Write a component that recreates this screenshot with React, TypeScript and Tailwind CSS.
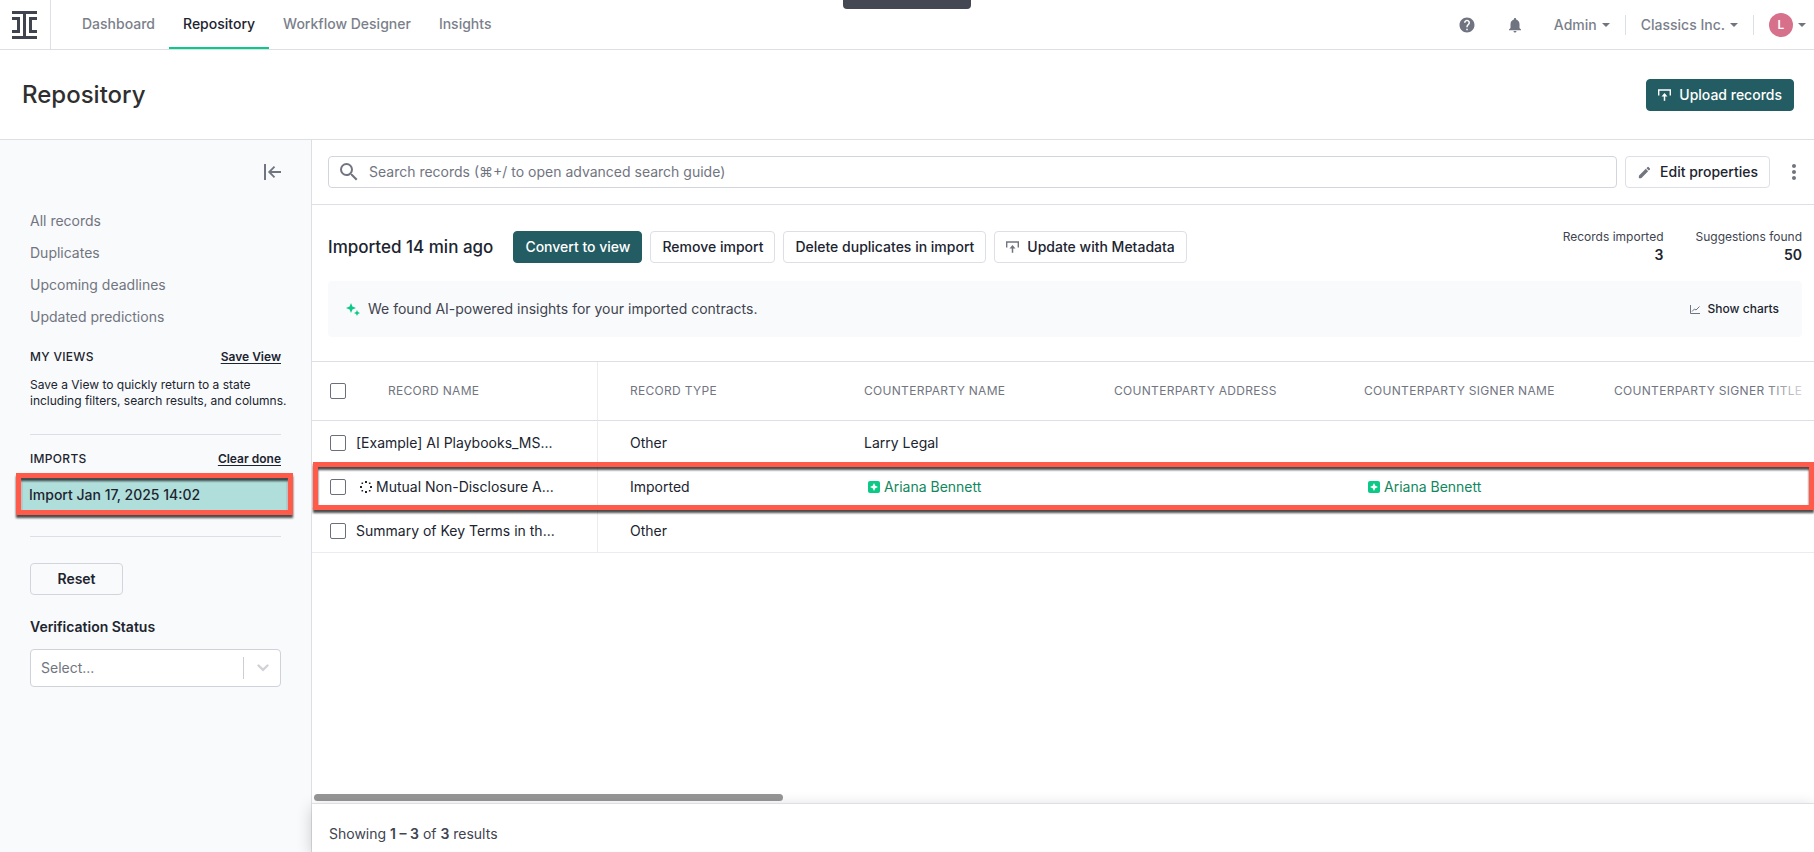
import React, { useState } from 'react';
import { MdEdit, MdHelp, MdMoreVert, MdNotifications, MdSearch } from 'react-icons/md';

type Suggestion = { suggested: string };
type Cell = string | Suggestion;

interface RecordRow {
  name: string;
  loading?: boolean;
  type: string;
  cells: Cell[];
}

const navLinks = ['Dashboard', 'Repository', 'Workflow Designer', 'Insights'];

const filters = ['All records', 'Duplicates', 'Upcoming deadlines', 'Updated predictions'];

const propertyColumns = [
  'Counterparty Name',
  'Counterparty Address',
  'Counterparty Signer Name',
  'Counterparty Signer Title',
];

const records: RecordRow[] = [
  { name: '[Example] AI Playbooks_MS...', type: 'Other', cells: ['Larry Legal', '', '', ''] },
  {
    name: 'Mutual Non-Disclosure A...',
    loading: true,
    type: 'Imported',
    cells: [{ suggested: 'Ariana Bennett' }, '', { suggested: 'Ariana Bennett' }, ''],
  },
  { name: 'Summary of Key Terms in th...', type: 'Other', cells: ['', '', '', ''] },
];

const Logo = () => (
  <svg width="26" height="28" viewBox="0 0 26 28" fill="#40444f" aria-hidden="true">
    <path d="M0 0h25v3H14v22h11v3H0v-3h11V3H0z" />
    <path d="M0 6h8v16H0v-3h5V9H0zM25 6h-8v16h8v-3h-5V9h5z" />
  </svg>
);

const Caret = () => (
  <svg width="8" height="4" viewBox="0 0 8 4" fill="#6f7480" aria-hidden="true">
    <path d="M0 0h8L4 4z" />
  </svg>
);

const UploadIcon = () => (
  <svg width="13" height="12" viewBox="0 0 13 12" fill="none" stroke="currentColor" aria-hidden="true">
    <path d="M.7 6.500V1h11.600v5.500" strokeWidth="1.4" />
    <path d="M6.500 11.800V6" strokeWidth="1.5" />
    <path d="M3.500 7.400 6.500 4l3 3.400z" fill="currentColor" stroke="none" />
  </svg>
);

const CollapseIcon = () => (
  <svg width="17" height="16" viewBox="0 0 17 16" fill="none" stroke="#71757f" aria-hidden="true">
    <path d="M1 0v16" strokeWidth="2" />
    <path d="M17 8H5.500M10.500 2.700 5.200 8l5.300 5.300" strokeWidth="1.8" />
  </svg>
);

const SparkleIcon = () => (
  <svg width="14" height="13" viewBox="0 0 14 13" fill="#0bc986" aria-hidden="true">
    <path d="M5 0 6.400 3.600 10 5 6.400 6.400 5 10 3.600 6.400 0 5 3.600 3.600z" />
    <path d="m11 7 .9 2.100L14 10l-2.100.9L11 13l-.9-2.100L8 10l2.100-.9z" />
  </svg>
);

const ChartIcon = () => (
  <svg width="10" height="9" viewBox="0 0 10 9" fill="none" stroke="#6f7480" aria-hidden="true">
    <path d="M.5 0v8.500H10" />
    <path d="M2 6.500 4.500 4l1.500 1L9.500 1.500" />
  </svg>
);

const SpinnerIcon = () => (
  <svg width="12" height="12" viewBox="0 0 12 12" fill="#20242f" aria-hidden="true">
    <path d="M5 0h2v2H5zM5 10h2v2H5zM0 5h2v2H0zM10 5h2v2h-2z" />
    <path d="M1.500 1.500h1.600v1.600H1.500zM8.900 1.500h1.600v1.600H8.900zM1.500 8.900h1.600v1.600H1.500zM8.900 8.900h1.600v1.600H8.900z" />
  </svg>
);

const SuggestionIcon = () => (
  <svg width="12" height="12" viewBox="0 0 12 12" aria-hidden="true">
    <rect width="12" height="12" rx="2" fill="#0bc986" />
    <path d="M6 2 7.300 4.700 10 6 7.300 7.300 6 10 4.700 7.300 2 6l2.700-1.300z" fill="#fff" />
  </svg>
);

const Highlight = ({ className }: { className: string }) => (
  <div
    className={`pointer-events-none absolute border-5 border-[#ff5a4a] drop-shadow-[0_3px_1px_rgba(0,0,0,0.7)] ${className}`}
  />
);

interface ButtonProps {
  children: React.ReactNode;
  primary?: boolean;
}

const Button: React.FC<ButtonProps> = ({ children, primary }) => (
  <button
    className={`flex h-8 items-center gap-2 whitespace-nowrap rounded border px-[11px] text-sm font-medium ${
      primary ? 'border-[#235c62] bg-[#235c62] text-white' : 'border-[#dedfe6] bg-white text-[#20242f]'
    }`}
  >
    {children}
  </button>
);

const Checkbox = ({ label }: { label: string }) => (
  <input
    type="checkbox"
    aria-label={label}
    className="block size-4 shrink-0 appearance-none rounded-xs border border-[#6b6f7a] bg-white checked:bg-[#235c62]"
  />
);

const Header = () => (
  <header className="relative flex h-[50px] items-stretch border-b border-[#dedfe4]">
    <a href="#" aria-label="Home" className="flex w-[51px] items-center border-r border-[#dedfe4] pl-3">
      <Logo />
    </a>
    <nav className="ml-[17px] flex">
      {navLinks.map((link) => (
        <a
          key={link}
          href="#"
          className={`flex items-center border-b-2 px-3.5 text-sm font-medium ${
            link === 'Repository' ? 'border-[#0bc986] text-[#20242f]' : 'border-transparent text-[#7b7f8b]'
          }`}
        >
          {link}
        </a>
      ))}
    </nav>
    <div className="absolute left-1/2 top-0 h-[9px] w-32 -translate-x-1/2 rounded-b bg-[#444852]" />
    <div className="ml-auto flex items-center pr-2 text-sm font-medium text-[#7b7f8b]">
      <button aria-label="Help" className="mr-[30px]">
        <MdHelp size={18} color="#6f7480" />
      </button>
      <button aria-label="Notifications" className="mr-[30px]">
        <MdNotifications size={18} color="#6f7480" />
      </button>
      <button className="flex items-center gap-[5px]">
        Admin
        <Caret />
      </button>
      <div className="mx-[15px] h-5 w-px bg-[#dedfe4]" />
      <button className="flex items-center gap-[5px]">
        Classics Inc.
        <Caret />
      </button>
      <div className="mx-[15px] h-5 w-px bg-[#dedfe4]" />
      <button aria-label="Account" className="flex items-center gap-[5px]">
        <span className="flex size-6 items-center justify-center rounded-full bg-[#d6708b] text-xs font-semibold text-white">
          L
        </span>
        <Caret />
      </button>
    </div>
  </header>
);

const Sidebar = () => (
  <aside className="w-[312px] shrink-0 border-r border-[#dedfe4] bg-[#f9fafc] px-[30px] pt-6">
    <div className="flex justify-end">
      <button aria-label="Collapse sidebar">
        <CollapseIcon />
      </button>
    </div>
    <ul className="mt-[25px] text-sm text-[#71757f]">
      {filters.map((filter) => (
        <li key={filter}>
          <a href="#" className="flex h-8 items-center">
            {filter}
          </a>
        </li>
      ))}
    </ul>

    {/* Saved views */}
    <div className="mt-4 flex justify-between text-xs leading-4 text-[#20242f]">
      <h2 className="font-medium tracking-wide">MY VIEWS</h2>
      <button className="font-semibold underline underline-offset-2">Save View</button>
    </div>
    <p className="mt-3 whitespace-nowrap text-xs leading-4 text-[#20242f]">
      Save a View to quickly return to a state
      <br />
      including filters, search results, and columns.
    </p>
    <hr className="mt-[25px] border-[#dedfe4]" />

    {/* Imports */}
    <div className="mt-4 flex justify-between text-xs leading-4 text-[#20242f]">
      <h2 className="font-medium tracking-wide">IMPORTS</h2>
      <button className="font-semibold underline underline-offset-2">Clear done</button>
    </div>
    <div className="relative -ml-2 -mr-1.5 mt-3">
      <a href="#" className="flex h-8 items-center bg-[#b0dedb] px-[7px] text-sm font-medium text-[#20242f]">
        Import Jan 17, 2025 14:02
      </a>
      <Highlight className="-inset-x-1.5 -top-1.5 -bottom-1" />
    </div>
    <hr className="mt-[25px] border-[#dedfe4]" />

    <button className="mt-[26px] block h-8 w-[93px] rounded border border-[#d3d5dc] text-sm font-semibold text-[#20242f]">
      Reset
    </button>
    <label htmlFor="verification" className="mt-[22px] block text-sm font-semibold text-[#20242f]">
      Verification Status
    </label>
    <div className="relative mt-3">
      <select
        id="verification"
        className="block h-[38px] w-full appearance-none rounded border border-[#d0d2d9] bg-white px-2.5 text-sm text-[#71757f]"
      >
        <option>Select...</option>
      </select>
      <div className="pointer-events-none absolute inset-y-2 right-0 flex w-[38px] items-center justify-center border-l border-[#ccced4]">
        <svg width="12" height="8" viewBox="0 0 12 8" fill="none" stroke="#d0d2d8" strokeWidth="2.4" aria-hidden="true">
          <path d="m1.500 1.500 4.500 4.300 4.500-4.300" strokeLinecap="round" />
        </svg>
      </div>
    </div>
  </aside>
);

const CellValue = ({ value }: { value: Cell }) => {
  if (typeof value === 'string') return <>{value}</>;
  return (
    <span className="flex items-center gap-1 pl-1 text-[#11875d]">
      <SuggestionIcon />
      {value.suggested}
    </span>
  );
};

const RecordsTable = () => (
  <div className="relative mt-6 flex-1 overflow-hidden border-t border-[#dedfe4]">
    <table className="w-[1520px] min-w-full table-fixed border-separate border-spacing-0 text-left text-sm text-[#20242f]">
      <colgroup>
        <col className="w-[286px]" />
        <col className="w-[234px]" />
        <col className="w-[250px]" />
        <col className="w-[250px]" />
        <col className="w-[250px]" />
        <col className="w-[250px]" />
      </colgroup>
      <thead>
        <tr className="h-[59px] whitespace-nowrap text-xs uppercase tracking-wide text-[#71757f]">
          <th className="border-b border-r border-b-[#dedfe6] border-r-[#ebecf1] pl-[18px] font-normal">
            <div className="flex items-center gap-[42px]">
              <Checkbox label="Select all records" />
              Record name
            </div>
          </th>
          <th className="border-b border-[#dedfe6] pl-8 font-normal">Record type</th>
          {propertyColumns.map((column) => (
            <th key={column} className="border-b border-[#dedfe6] pl-8 font-normal">
              {column}
            </th>
          ))}
        </tr>
      </thead>
      <tbody>
        {records.map((record) => (
          <tr key={record.name} className="h-11 whitespace-nowrap">
            <td className="border-b border-r border-[#ebecf1] pl-[18px]">
              <div className="flex items-center gap-2.5">
                <Checkbox label={record.name} />
                <span className="flex items-center gap-1">
                  {record.loading && (
                    <span className="pl-1">
                      <SpinnerIcon />
                    </span>
                  )}
                  {record.name}
                </span>
              </div>
            </td>
            <td className="border-b border-[#ebecf1] pl-8">{record.type}</td>
            {record.cells.map((cell, index) => (
              <td key={propertyColumns[index]} className="border-b border-[#ebecf1] pl-8">
                <CellValue value={cell} />
              </td>
            ))}
          </tr>
        ))}
      </tbody>
    </table>
    {/* Header fades out where more columns follow */}
    <div className="pointer-events-none absolute right-0 top-0 flex h-[58px]">
      <div className="w-9 bg-linear-to-r from-white/0 to-white/70" />
      <div className="w-3 bg-white" />
    </div>
    <Highlight className="left-px right-0 top-[100px] h-12" />
    <div className="absolute bottom-0.5 left-0.5 h-[7px] w-5/16 rounded-full bg-[#969696]" />
  </div>
);

const Stat = ({ label, value }: { label: string; value: number }) => (
  <div className="text-right">
    <div className="text-xs leading-4 text-[#40444f]">{label}</div>
    <div className="text-sm font-semibold text-[#20242f]">{value}</div>
  </div>
);

export default function App() {
  const [query, setQuery] = useState('');

  return (
    <div className="flex min-h-screen flex-col overflow-hidden bg-white font-['Inter','Liberation_Sans',sans-serif]">
      <Header />
      <div className="flex h-[90px] items-center justify-between border-b border-[#dedfe4] pl-[22px] pr-5">
        <h1 className="text-2xl font-medium text-[#2f2f2f]">Repository</h1>
        <Button primary>
          <UploadIcon />
          Upload records
        </Button>
      </div>
      <div className="flex flex-1">
        <Sidebar />
        <main className="flex min-w-0 flex-1 flex-col">
          <div className="flex items-center gap-2 border-b border-[#dedfe6] py-4 pl-4 pr-2">
            <div className="flex h-8 flex-1 items-center gap-2 rounded border border-[#d3d5dc] pl-2">
              <MdSearch size={24} color="#71757f" />
              <input
                type="text"
                aria-label="Search records"
                value={query}
                onChange={(e) => setQuery(e.target.value)}
                placeholder="Search records (⌘+/ to open advanced search guide)"
                className="min-w-0 flex-1 bg-transparent text-sm outline-none placeholder:text-[#71757f]"
              />
            </div>
            <Button>
              <MdEdit size={15} color="#71757f" />
              Edit properties
            </Button>
            <button aria-label="More options" className="ml-1">
              <MdMoreVert size={24} color="#71757f" />
            </button>
          </div>

          <div className="flex items-center pl-4 pr-3 pt-[26px]">
            <h2 className="mr-5 whitespace-nowrap text-[17px] font-medium leading-8 text-[#20242f]">
              Imported 14 min ago
            </h2>
            <div className="flex gap-2">
              <Button primary>Convert to view</Button>
              <Button>Remove import</Button>
              <Button>Delete duplicates in import</Button>
              <Button>
                <span className="text-[#71757f]">
                  <UploadIcon />
                </span>
                Update with Metadata
              </Button>
            </div>
            <div className="-my-1 ml-auto flex gap-8">
              <Stat label="Records imported" value={3} />
              <Stat label="Suggestions found" value={50} />
            </div>
          </div>

          <div className="ml-4 mr-3 mt-[18px] flex h-14 items-center gap-2 rounded bg-[#f9fafc] pl-[18px] pr-[23px] text-sm text-[#40444f]">
            <SparkleIcon />
            We found AI-powered insights for your imported contracts.
            <button className="ml-auto flex items-center gap-2 text-xs font-medium text-[#20242f]">
              <ChartIcon />
              Show charts
            </button>
          </div>

          <RecordsTable />

          <footer className="relative h-[49px] border-t border-[#dedfe4] bg-white pl-[17px] pt-5 text-sm text-[#40444f] shadow-[0_4px_16px_rgba(0,0,0,0.2)]">
            Showing <b className="font-semibold">1 – 3</b> of <b className="font-semibold">3</b> results
          </footer>
        </main>
      </div>
    </div>
  );
}
